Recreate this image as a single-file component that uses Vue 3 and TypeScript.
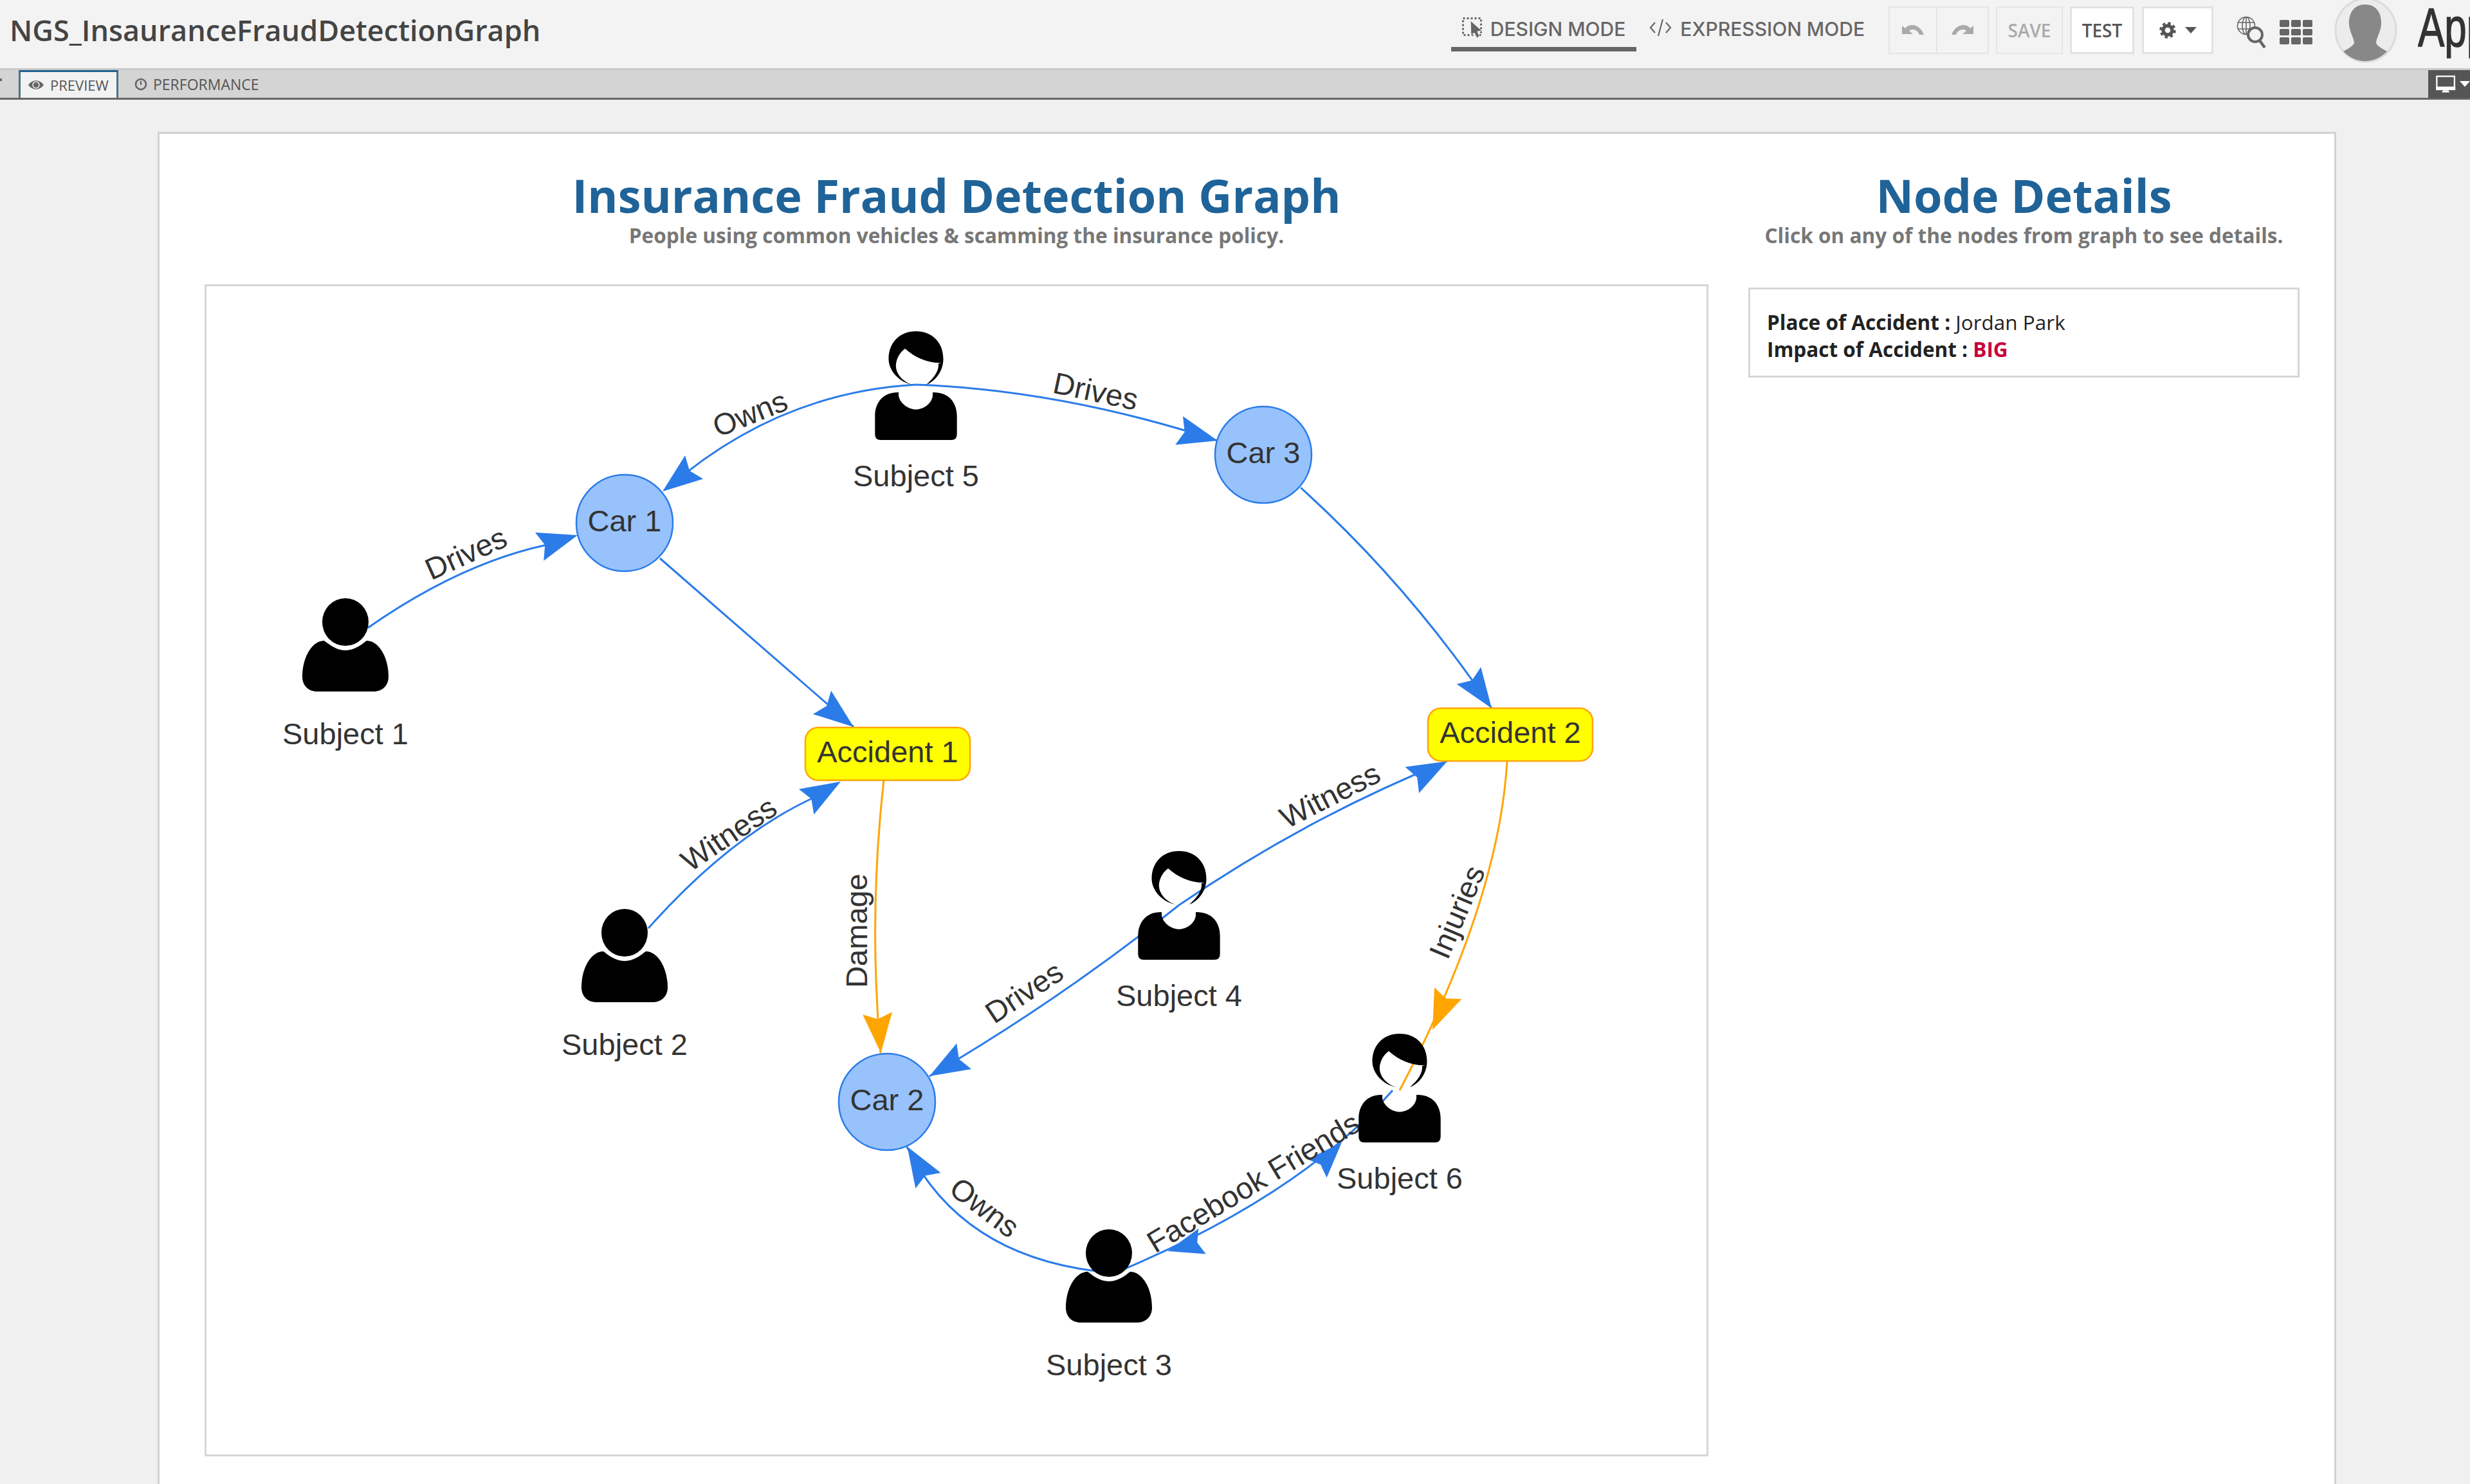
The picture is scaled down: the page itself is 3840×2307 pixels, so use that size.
<script setup lang="ts">
interface Edge {
  d: string
  color: string
}
interface Arrow {
  x: number
  y: number
  angle: number
  color: string
  len?: number
}
interface EdgeLabel {
  text: string
  x: number
  y: number
  angle: number
}
interface Person {
  name: string
  x: number
  y: number
  female: boolean
}

const BLUE = '#2b7ce9'
const ORANGE = '#ffa500'

const edges: Edge[] = [
  { d: 'M572 976 Q715 876 850 847', color: BLUE },
  { d: 'M1424 598 Q1210 610 1040 757', color: BLUE },
  { d: 'M1424 598 Q1650 606 1893 685', color: BLUE },
  { d: 'M1026 868 L1327 1130', color: BLUE },
  { d: 'M2022 758 Q2190 910 2319 1101', color: BLUE },
  { d: 'M1008 1443 Q1135 1300 1265 1240', color: BLUE },
  { d: 'M1374 1213 Q1350 1425 1369 1637', color: ORANGE },
  { d: 'M1833 1407 Q2030 1272 2250 1183', color: BLUE },
  { d: 'M1833 1407 Q1650 1553 1445 1673', color: BLUE },
  { d: 'M1704 1976 Q1493 1950 1410 1783', color: BLUE },
  { d: 'M1745 1974 Q2025 1856 2165 1695', color: BLUE },
  { d: 'M2343 1184 Q2330 1401 2176 1695', color: ORANGE },
]

const arrows: Arrow[] = [
  { x: 898, y: 832, angle: -16.7, color: BLUE },
  { x: 1030, y: 764, angle: 142.4, color: BLUE },
  { x: 1893, y: 685, angle: 14.8, color: BLUE },
  { x: 1327, y: 1130, angle: 37.8, color: BLUE },
  { x: 2319, y: 1101, angle: 55, color: BLUE },
  { x: 1307, y: 1215, angle: -30.6, color: BLUE },
  { x: 1369.5, y: 1637, angle: 85, color: ORANGE },
  { x: 2250, y: 1183.5, angle: -28, color: BLUE },
  { x: 1445, y: 1673, angle: 150, color: BLUE },
  { x: 1410.5, y: 1782.6, angle: -121.6, color: BLUE },
  { x: 1815.4, y: 1945, angle: 164, color: BLUE, len: 0.9 },
  { x: 2086, y: 1776, angle: -46.5, color: BLUE, len: 0.9 },
  { x: 2227, y: 1601, angle: 113, color: ORANGE },
]

const edgeLabels: EdgeLabel[] = [
  { text: 'Drives', x: 731, y: 875, angle: -24.4 },
  { text: 'Owns', x: 1172, y: 658, angle: -21.8 },
  { text: 'Drives', x: 1700, y: 624, angle: 12 },
  { text: 'Witness', x: 1142, y: 1310, angle: -33.9 },
  { text: 'Damage', x: 1348, y: 1447, angle: -90 },
  { text: 'Drives', x: 1601, y: 1556, angle: -33.4 },
  { text: 'Witness', x: 2075, y: 1251, angle: -27 },
  { text: 'Injuries', x: 2280, y: 1424, angle: -67 },
  { text: 'Owns', x: 1521, y: 1890, angle: 37 },
  { text: 'Facebook Friends', x: 1957, y: 1852, angle: -31 },
]

const people: Person[] = [
  { name: 'Subject 1', x: 537, y: 930, female: false },
  { name: 'Subject 2', x: 971, y: 1413, female: false },
  { name: 'Subject 3', x: 1724, y: 1911, female: false },
  { name: 'Subject 4', x: 1833, y: 1323, female: true },
  { name: 'Subject 5', x: 1424, y: 515, female: true },
  { name: 'Subject 6', x: 2176, y: 1607, female: true },
]

const cars = [
  { name: 'Car 1', x: 971, y: 813 },
  { name: 'Car 2', x: 1379, y: 1713 },
  { name: 'Car 3', x: 1964, y: 707 },
]

const accidents = [
  { name: 'Accident 1', x: 1252, y: 1131 },
  { name: 'Accident 2', x: 2220, y: 1101 },
]

const HAIR =
  'M0 0C26 0 42.5 18 42.5 43C42.5 62 30 78 16 83C28 72 36 62 35 50L40 49C20 50 0 42 -17 27C-28 35 -32 48 -31 56C-30 68 -18 80 -5 83C-25 80 -42.5 62 -42.5 43C-42.5 18 -26 0 0 0Z'
const FEMALE_BODY =
  'M-27 95L-27 100C-25 112 -12 121.5 0 121.5C12 121.5 25 112 26 100L26 95C48 94 63.7 108 63.7 132L63.7 160Q63.7 169 55 169L-55 169Q-63.7 169 -63.7 160L-63.7 132C-63.7 108 -48 94 -27 95Z'
const MALE_BODY =
  'M-33 66C-25 72 -14 81 0 81C14 81 25 72 33 66C52 66 67 92 67 122C67 136 57 145 44 145L-44 145C-57 145 -67 136 -67 122C-67 92 -52 66 -33 66Z'

const gridCells = Array.from({ length: 9 }, (_, i) => i)
</script>

<template>
  <div class="page">
    <header class="topbar">
      <div class="app-title">NGS_InsauranceFraudDetectionGraph</div>
      <div class="top-actions">
        <div class="mode active">
          <svg class="mode-icon" width="31" height="32" viewBox="0 0 31 32">
            <rect x="1.5" y="1.5" width="28" height="26" fill="none" stroke="#666" stroke-width="3" stroke-dasharray="3 3" />
            <path d="M13 5L31 21L24 22L27 30L23 32L19 24L14 28Z" fill="#666" stroke="#f3f3f3" stroke-width="1" />
          </svg>
          <span>DESIGN MODE</span>
        </div>
        <div class="mode">
          <svg class="mode-icon" width="35" height="28" viewBox="0 0 35 28">
            <path d="M9 6L2 14L9 22M26 6L33 14L26 22M21 1L14 27" fill="none" stroke="#666" stroke-width="2.2" />
          </svg>
          <span>EXPRESSION MODE</span>
        </div>
        <div class="btn-group">
          <div class="tool-btn undo">
            <svg width="34" height="16" viewBox="0 0 34 16"><path d="M0 1L0 14L17 14L11 9C16 5 24 7 27 15L34 15C30 4 22 0 16 0C12 0 8 1 5 5Z" fill="#aaa" /></svg>
          </div>
          <div class="tool-btn redo">
            <svg width="34" height="16" viewBox="0 0 34 16"><path d="M34 1L34 14L17 14L23 9C18 5 10 7 7 15L0 15C4 4 12 0 18 0C22 0 26 1 29 5Z" fill="#aaa" /></svg>
          </div>
        </div>
        <div class="text-btn save">SAVE</div>
        <div class="text-btn test">TEST</div>
        <div class="text-btn gear-btn">
          <svg width="26" height="26" viewBox="0 0 26 26">
            <circle cx="13" cy="13" r="7" fill="none" stroke="#555" stroke-width="5.5" />
            <circle cx="13" cy="13" r="10.5" fill="none" stroke="#555" stroke-width="4.5" stroke-dasharray="4.2 4.05" />
          </svg>
          <svg width="18" height="10" viewBox="0 0 18 10"><path d="M0 0H18L9 10Z" fill="#555" /></svg>
        </div>
        <svg class="globe" width="46" height="50" viewBox="0 0 46 50">
          <g fill="none" stroke="#666" stroke-width="1.6">
            <circle cx="15" cy="15" r="13.5" />
            <ellipse cx="15" cy="15" rx="6" ry="13.5" />
            <path d="M15 1.5V28.5M2 10H28M2 20H28" />
          </g>
          <circle cx="29" cy="29" r="11" fill="#f3f3f3" stroke="#666" stroke-width="4" />
          <path d="M36 38L44 49" stroke="#666" stroke-width="4.5" />
        </svg>
        <div class="grid-icon">
          <span v-for="cell in gridCells" :key="cell" class="grid-cell"></span>
        </div>
        <svg class="avatar" width="98" height="98" viewBox="0 0 98 98">
          <clipPath id="avatar-clip"><ellipse cx="49" cy="47" rx="47" ry="49" /></clipPath>
          <ellipse cx="49" cy="47" rx="47" ry="49" fill="#ececec" stroke="#dcdcdc" stroke-width="3" />
          <path clip-path="url(#avatar-clip)" d="M48 7C65 7 74 20 73 38C72 50 66 58 65 66C66 72 76 76 82 80C72 90 60 95 48 95C36 95 24 90 14 80C20 76 30 72 31 66C30 58 24 50 23 38C22 20 31 7 48 7Z" fill="#888" />
        </svg>
        <div class="logo-clip"><span class="logo">App</span></div>
      </div>
    </header>

    <nav class="tabbar">
      <span class="tick"></span>
      <div class="tab current">
        <svg width="24" height="16" viewBox="0 0 24 16">
          <path d="M0 8C6 -1 18 -1 24 8C18 17 6 17 0 8Z" fill="#666" />
          <circle cx="12" cy="8" r="5" fill="#666" stroke="#f2f2f2" stroke-width="1.5" />
        </svg>
        <span>PREVIEW</span>
      </div>
      <div class="tab">
        <svg width="20" height="20" viewBox="0 0 20 20">
          <circle cx="10" cy="10" r="8" fill="none" stroke="#666" stroke-width="2.6" />
          <path d="M10 5V11" stroke="#666" stroke-width="2.4" />
        </svg>
        <span>PERFORMANCE</span>
      </div>
      <div class="device-btn">
        <svg width="36" height="30" viewBox="0 0 36 30">
          <rect x="1.5" y="1.5" width="30" height="19" fill="#555" stroke="#fff" stroke-width="2.5" />
          <rect x="0" y="19" width="33" height="6" fill="#fff" />
          <path d="M12 25H21L23 29H10Z" fill="#fff" />
        </svg>
        <svg class="device-caret" width="16" height="9" viewBox="0 0 16 9"><path d="M0 0H16L8 9Z" fill="#fff" /></svg>
      </div>
    </nav>

    <main class="content">
      <section class="card">
        <div class="graph-col">
          <h1 class="heading">Insurance Fraud Detection Graph</h1>
          <p class="subheading">People using common vehicles &amp; scamming the insurance policy.</p>
          <div class="graph-box">
            <svg class="graph" width="2332" height="1816" viewBox="321 445 2332 1816">
              <path v-for="(edge, i) in edges" :key="'e' + i" :d="edge.d" :stroke="edge.color" stroke-width="3" fill="none" />
              <polygon
                v-for="(a, i) in arrows"
                :key="'a' + i"
                points="0,0 -62,-23 -53,0 -62,23"
                :fill="a.color"
                :transform="`translate(${a.x} ${a.y}) rotate(${a.angle}) scale(${a.len ?? 1})`"
              />
              <text
                v-for="(l, i) in edgeLabels"
                :key="'l' + i"
                class="graph-text"
                text-anchor="middle"
                :transform="`translate(${l.x} ${l.y}) rotate(${l.angle})`"
              >{{ l.text }}</text>
              <g v-for="car in cars" :key="car.name">
                <circle :cx="car.x" :cy="car.y" r="75" fill="#97c2fc" stroke="#2b7ce9" stroke-width="2.5" />
                <text class="graph-text" text-anchor="middle" :x="car.x" :y="car.y + 13">{{ car.name }}</text>
              </g>
              <g v-for="acc in accidents" :key="acc.name">
                <rect :x="acc.x" :y="acc.y" width="256" height="82" rx="20" fill="#ffff00" stroke="#ffa500" stroke-width="2.5" />
                <text class="graph-text" text-anchor="middle" :x="acc.x + 128" :y="acc.y + 54">{{ acc.name }}</text>
              </g>
              <g v-for="p in people" :key="p.name" :transform="`translate(${p.x} ${p.y})`">
                <template v-if="p.female">
                  <path :d="HAIR" fill="#000" />
                  <path :d="FEMALE_BODY" fill="#000" />
                  <text class="graph-text" text-anchor="middle" y="241">{{ p.name }}</text>
                </template>
                <template v-else>
                  <ellipse cy="37" rx="36" ry="37" fill="#000" />
                  <path :d="MALE_BODY" fill="#000" />
                  <text class="graph-text" text-anchor="middle" y="227">{{ p.name }}</text>
                </template>
              </g>
            </svg>
          </div>
        </div>
        <aside class="details-col">
          <h1 class="heading">Node Details</h1>
          <p class="subheading">Click on any of the nodes from graph to see details.</p>
          <div class="details-box">
            <div><b>Place of Accident :</b> Jordan Park</div>
            <div><b>Impact of Accident :</b> <b class="impact">BIG</b></div>
          </div>
        </aside>
      </section>
    </main>
  </div>
</template>

<style>
html,
body {
  margin: 0;
  background: #f0f0f0;
}
</style>

<style scoped>
.page {
  width: 3840px;
  height: 2307px;
  overflow: hidden;
  display: flex;
  flex-direction: column;
  background: #f0f0f0;
  font-family: "Open Sans", "Liberation Sans", sans-serif;
}

.topbar {
  height: 106px;
  flex: none;
  display: flex;
  align-items: flex-start;
  justify-content: space-between;
  background: #f3f3f3;
  box-sizing: border-box;
}

.app-title {
  margin: 17px 0 0 15px;
  font-size: 45px;
  line-height: 60px;
  font-weight: 600;
  color: #444;
}

.top-actions {
  display: flex;
  align-items: flex-start;
  height: 106px;
}

.mode {
  display: flex;
  align-items: center;
  height: 70px;
  box-sizing: content-box;
  padding: 3px 17px 0;
  gap: 13px;
  font-family: Inter, "Open Sans", sans-serif;
  font-size: 30px;
  font-weight: 500;
  color: #666;
}

.mode span {
  margin-top: 13px;
}

.mode-icon {
  flex: none;
  margin-top: 10px;
}

.mode.active {
  border-bottom: 7px solid #666;
}

.mode + .mode {
  padding-left: 20px;
}

.btn-group {
  display: flex;
  margin: 10px 11px 0 20px;
}

.tool-btn {
  width: 76px;
  height: 74px;
  box-sizing: border-box;
  border: 2px solid #e4e4e4;
  display: flex;
  align-items: center;
  justify-content: center;
}

.tool-btn + .tool-btn {
  border-left: none;
  width: 80px;
}

.text-btn {
  height: 74px;
  margin: 10px 11px 0 0;
  box-sizing: border-box;
  border: 3px solid #e2e2e2;
  display: flex;
  align-items: center;
  justify-content: center;
  font-size: 28px;
  font-weight: 600;
}

.save {
  width: 104px;
  color: #aaa;
  border-width: 2px;
  border-color: #e6e6e6;
}

.test {
  width: 100px;
  margin-right: 12px;
  background: #fff;
  color: #555;
}

.gear-btn {
  width: 111px;
  gap: 14px;
  background: #fff;
}

.globe {
  margin: 25px 0 0 25px;
  flex: none;
}

.grid-icon {
  margin: 31px 0 0 21px;
  width: 51px;
  height: 38px;
  display: grid;
  grid-template-columns: repeat(3, 1fr);
  grid-template-rows: repeat(3, 1fr);
  gap: 3px;
}

.grid-cell {
  background: #666;
  border-radius: 2px;
}

.avatar {
  margin: 0 0 0 34px;
  flex: none;
}

.logo-clip {
  width: 81px;
  height: 106px;
  margin-left: 32px;
  overflow: hidden;
}

.logo {
  display: block;
  margin-top: -11px;
  font-family: "Liberation Sans", sans-serif;
  font-size: 86px;
  line-height: 106px;
  color: #333;
  -webkit-text-stroke: 1.5px #333;
  transform: scaleX(0.72);
  transform-origin: 0 0;
}

.tabbar {
  height: 49px;
  flex: none;
  box-sizing: border-box;
  position: relative;
  display: flex;
  align-items: stretch;
  background: #d4d4d4;
  border-top: 3px solid #c9c9c9;
  border-bottom: 3px solid #666;
  padding-left: 29px;
  font-size: 23px;
  color: #555;
}

.tick {
  position: absolute;
  left: 0;
  top: 13px;
  width: 3px;
  height: 4px;
  background: #666;
}

.tab {
  display: flex;
  align-items: center;
  gap: 9px;
  padding: 0 10px 0 25px;
}

.tab.current {
  width: 155px;
  box-sizing: border-box;
  font-size: 22px;
  padding: 0 0 0 12px;
  gap: 10px;
  background: #f2f2f2;
  border: 3px solid #4d7189;
  border-top-color: #20608f;
  border-bottom: none;
}

.device-btn {
  margin-left: auto;
  width: 65px;
  background: #555;
  display: flex;
  align-items: center;
  padding-left: 12px;
  box-sizing: border-box;
  overflow: hidden;
  flex: none;
}

.device-caret {
  flex: none;
  margin: 0 0 0 4px;
}

.content {
  flex: 1;
  min-height: 0;
  padding: 50px 208px 0 245px;
}

.card {
  height: 100%;
  box-sizing: border-box;
  background: #fff;
  border: 3px solid #d2d2d2;
  border-bottom: none;
  padding: 0 54px 0 70px;
  display: flex;
  gap: 62px;
}

.graph-col {
  width: 2338px;
  flex: none;
}

.details-col {
  flex: 1;
  min-width: 0;
}

.heading {
  margin: 51px 0 0;
  font-size: 72px;
  line-height: 88px;
  font-weight: 700;
  text-align: center;
  color: #1f6398;
}

.subheading {
  margin: 1px 0 0;
  font-size: 31.6px;
  line-height: 36px;
  font-weight: 700;
  text-align: center;
  color: #777;
}

.graph-box {
  margin-top: 58px;
  border: 3px solid #d6d6d6;
  height: 1822px;
  box-sizing: border-box;
}

.graph {
  display: block;
}

.graph-text {
  font-family: "Liberation Sans", Arial, sans-serif;
  font-size: 47px;
  fill: #333;
}

.details-box {
  margin-top: 63px;
  height: 140px;
  box-sizing: border-box;
  border: 3px solid #d6d6d6;
  padding: 30px 26px 0;
  font-size: 31.5px;
  line-height: 42px;
  color: #222;
}

.impact {
  color: #c8003c;
}
</style>
